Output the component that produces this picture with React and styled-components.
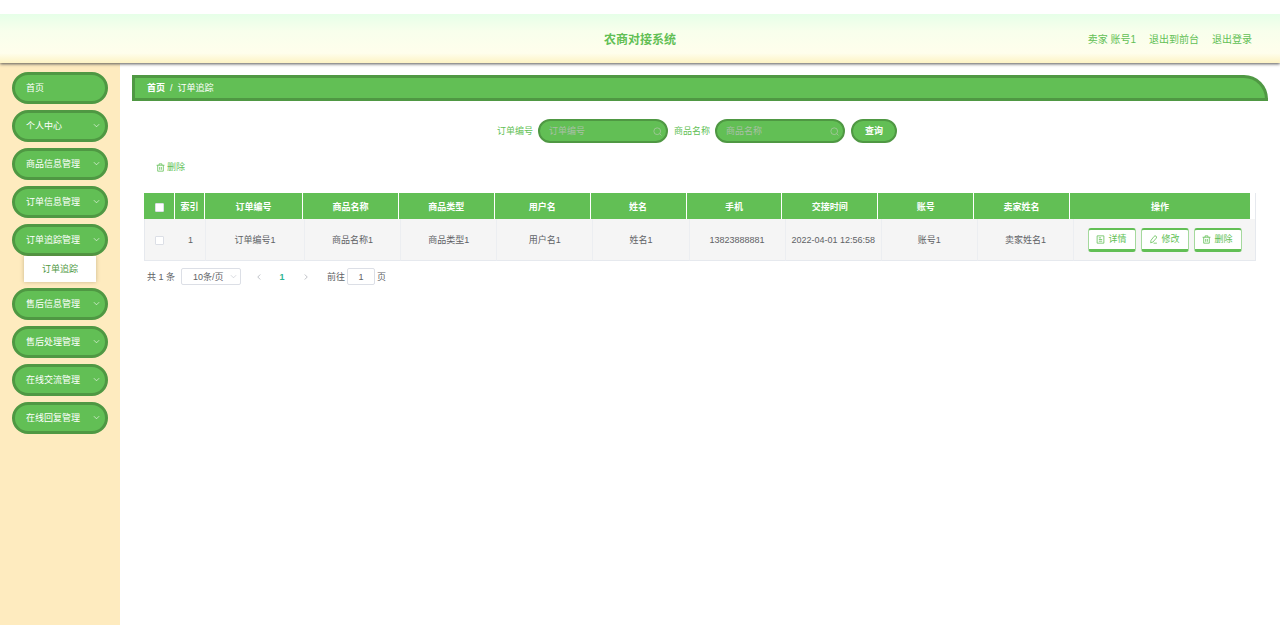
import React from "react";
import styled, { createGlobalStyle, css } from "styled-components";

const green = "#62bf55";
const darkGreen = "#4f9843";
const line = "#e6e9ee";
const grey = "#606266";

const GlobalStyle = createGlobalStyle`
  *, *::before, *::after { box-sizing: border-box; }
  body {
    margin: 0;
    background: #fff;
    color: ${grey};
    font-family: "Liberation Sans", "Noto Sans CJK SC", sans-serif;
    font-size: 9px;
    line-height: 12px;
  }
  button, input, select { font: inherit; color: inherit; margin: 0; }
  button { cursor: pointer; }
  a { color: inherit; text-decoration: none; }
`;

const Page = styled.div`
  display: flex;
  flex-direction: column;
  min-height: 100vh;
  padding: 14px 0 15px;
`;

const Header = styled.header`
  display: grid;
  grid-template-columns: 1fr auto 1fr;
  align-items: center;
  height: 49px;
  padding: 2px 28px 0;
  color: ${green};
  background: linear-gradient(180deg, #e6ffe8 0%, #f8ffec 35%, #fffeec 80%, #fdf3c4 100%);
  box-shadow: 0 1px 3px #555;
  clip-path: inset(0 0 -5px);
  z-index: 1;
`;

const Title = styled.h1`
  grid-column: 2;
  margin: 0;
  font-size: 12px;
  font-weight: 700;
  line-height: 20px;
`;

const UserNav = styled.nav`
  display: flex;
  justify-content: flex-end;
  gap: 13px;
  font-size: 10px;
  line-height: 16px;
`;

const Body = styled.div`
  display: flex;
  flex: 1;
`;

const Sidebar = styled.nav`
  flex: none;
  width: 120px;
  padding: 9px 12px;
  background: #feebbf;
`;

const Menu = styled.ul`
  display: flex;
  flex-direction: column;
  gap: 6px;
  margin: 0;
  padding: 0;
  list-style: none;
`;

const MenuButton = styled.button`
  display: flex;
  align-items: center;
  justify-content: space-between;
  width: 100%;
  height: 32px;
  padding: 0 5px 1px 11px;
  border: 3px solid ${darkGreen};
  border-radius: 16px;
  background: ${green};
  color: #fff;
`;

const SubLink = styled.a`
  display: block;
  margin: 0 12px;
  background: #fff;
  color: ${darkGreen};
  line-height: 26px;
  text-align: center;
  box-shadow: 0 0 4px rgba(120, 100, 60, 0.4);
`;

const Main = styled.main`
  flex: 1;
  min-width: 0;
  padding: 12px 12px;
`;

const Breadcrumb = styled.nav`
  display: flex;
  align-items: center;
  gap: 5px;
  height: 26px;
  padding: 0 12px 1px;
  border: 3px solid ${darkGreen};
  border-radius: 0 24px 0 0;
  background: ${green};
  color: #fff;
`;

const HomeLink = styled.a`
  font-weight: 700;
`;

const SearchForm = styled.form`
  display: flex;
  justify-content: center;
  align-items: center;
  gap: 6px;
  margin-top: 18px;
  padding-right: 6px;
`;

const Field = styled.label`
  display: flex;
  align-items: center;
  gap: 5px;
  color: ${green};
`;

const pill = css`
  height: 24px;
  border: 2px solid ${darkGreen};
  border-radius: 12px;
  background: ${green};
`;

const SearchBox = styled.span`
  ${pill}
  display: flex;
  align-items: center;
  width: 130px;
  padding: 0 4px 0 9px;
  color: #a9c8a2;
`;

const SearchInput = styled.input`
  flex: 1;
  min-width: 0;
  padding: 0;
  border: 0;
  outline: 0;
  background: none;
  color: #fff;
  &::placeholder { color: #a9bfa6; opacity: 1; }
`;

const QueryButton = styled.button`
  ${pill}
  width: 46px;
  padding: 0;
  color: #fff;
  font-weight: 700;
`;

const Content = styled.section`
  padding: 0 12px;
`;

const ToolButton = styled.button`
  display: flex;
  align-items: center;
  gap: 2px;
  height: 24px;
  margin: 12px 0 14px;
  padding: 0 12px;
  border: 0;
  background: none;
  color: ${green};
`;

const HeadFrame = styled.div`
  padding-right: 5px;
  border-right: 1px solid ${line};
`;

const Table = styled.table`
  width: 100%;
  table-layout: fixed;
  border-collapse: separate;
  border-spacing: 0;
  text-align: center;
`;

const Col = styled.col`
  width: ${(p) => (p.$w ? p.$w + "px" : "auto")};
`;

const HeadCell = styled.th`
  height: 26px;
  padding: 1px 0 0;
  border-right: 1px solid #fff;
  background: ${green};
  color: #fff;
  &:last-child { border-right: 0; }
`;

const Cell = styled.td`
  height: 42px;
  padding: 0;
  border-bottom: 1px solid ${line};
  border-right: ${(p) => (p.$plain ? "0" : "1px solid #eceef1")};
  background: #f5f5f5;
  white-space: nowrap;
  &:first-child { padding-right: 3px; border-left: 1px solid ${line}; }
  &:last-child { border-right: 1px solid ${line}; }
`;

const Check = styled.input.attrs({ type: "checkbox" })`
  appearance: none;
  display: block;
  width: 9px;
  height: 9px;
  margin: 1px auto 0;
  border: 1px solid #dcdfe6;
  border-radius: 1px;
  background: #fff;
`;

const Actions = styled.div`
  display: flex;
  justify-content: center;
  gap: 5px;
`;

const ActionButton = styled.button`
  display: flex;
  align-items: center;
  justify-content: center;
  gap: 3px;
  width: 48px;
  height: 24px;
  padding: 0;
  border: solid ${green};
  border-color: ${green} #a5d99d;
  border-width: 2px 1px 3px;
  border-radius: 3px;
  background: #fff;
  color: ${green};
`;

const Pagination = styled.nav`
  display: flex;
  align-items: center;
  margin-top: 7px;
  padding-left: 3px;
`;

const SizePicker = styled.span`
  display: grid;
  align-items: center;
  width: 60px;
  height: 17px;
  margin: 0 12px 0 6px;
  border: 1px solid #dcdfe6;
  border-radius: 2px;
  color: #c0c4cc;
  & > * { grid-area: 1 / 1; }
  & > svg { justify-self: end; margin-right: 3px; pointer-events: none; }
`;

const SizeSelect = styled.select`
  appearance: none;
  height: 15px;
  padding: 0 0 0 11px;
  border: 0;
  outline: 0;
  background: none;
  color: ${grey};
`;

const PageButton = styled.button`
  display: flex;
  align-items: center;
  justify-content: center;
  width: ${(p) => (p.$current ? "36px" : "11px")};
  height: 17px;
  padding: 0;
  border: 0;
  background: none;
  color: ${(p) => (p.$current ? "#2fb594" : "#a4a8b0")};
  font-weight: 700;
`;

const Jump = styled.label`
  display: flex;
  align-items: center;
  gap: 2px;
  margin-left: 16px;
`;

const JumpInput = styled.input`
  width: 28px;
  height: 17px;
  padding: 0;
  border: 1px solid #dcdfe6;
  border-radius: 2px;
  text-align: center;
`;

const Svg = ({ size = 8, children }) => (
  <svg width={size} height={size} viewBox="0 0 16 16" fill="none" stroke="currentColor" strokeWidth="1.4" aria-hidden="true">
    {children}
  </svg>
);
const Chevron = ({ d = "M2 5l6 6 6-6", size = 7 }) => <Svg size={size}><path d={d} /></Svg>;
const SearchIcon = () => (
  <Svg size={9}><circle cx="7.5" cy="7.5" r="6" /><path d="M12 12l3 3" /></Svg>
);
const TrashIcon = () => (
  <Svg size={9}><path d="M1 4h14M5.5 4V1.5h5V4M3 4v10.5h10V4M6.5 7v5M9.500 7v5" /></Svg>
);
const DocIcon = () => (
  <Svg size={9}><path d="M2 1.5h12v13H2zM5 5h4M5 8h6M5 11h6" /></Svg>
);
const EditIcon = () => (
  <Svg size={9}><path d="M9 2.500q1.500-2 3.500-.5t.5 3.500l-6 7-4 1.500.5-4.500zM8 14.500h6" /></Svg>
);

const menu = [
  { label: "首页", leaf: true },
  { label: "个人中心" },
  { label: "商品信息管理" },
  { label: "订单信息管理" },
  { label: "订单追踪管理", child: "订单追踪" },
  { label: "售后信息管理" },
  { label: "售后处理管理" },
  { label: "在线交流管理" },
  { label: "在线回复管理" },
];

const columns = [
  ["订单编号", "订单编号1"],
  ["商品名称", "商品名称1"],
  ["商品类型", "商品类型1"],
  ["用户名", "用户名1"],
  ["姓名", "姓名1"],
  ["手机", "13823888881"],
  ["交接时间", "2022-04-01 12:56:58"],
  ["账号", "账号1"],
  ["卖家姓名", "卖家姓名1"],
];

const Columns = ({ widths: [check, index, order, action] }) => (
  <colgroup>
    <Col $w={check} />
    <Col $w={index} />
    <Col $w={order} />
    {columns.slice(1).map(([name]) => <Col key={name} />)}
    <Col $w={action} />
  </colgroup>
);

const SearchField = ({ label }) => (
  <Field>
    {label}
    <SearchBox>
      <SearchInput type="text" placeholder={label} />
      <SearchIcon />
    </SearchBox>
  </Field>
);

export default function App() {
  return (
    <>
      <GlobalStyle />
      <Page>
        <Header>
          <Title>农商对接系统</Title>
          <UserNav>
            <span>卖家 账号1</span>
            <a href="#front">退出到前台</a>
            <a href="#logout">退出登录</a>
          </UserNav>
        </Header>
        <Body>
          <Sidebar>
            <Menu>
              {menu.map(({ label, leaf, child }) => (
                <li key={label}>
                  <MenuButton type="button">
                    {label}
                    {!leaf && <Chevron />}
                  </MenuButton>
                  {child && <SubLink href="#tracking">{child}</SubLink>}
                </li>
              ))}
            </Menu>
          </Sidebar>
          <Main>
            <Breadcrumb>
              <HomeLink href="#home">首页</HomeLink>
              <span>/</span>
              <span>订单追踪</span>
            </Breadcrumb>
            <SearchForm onSubmit={(e) => e.preventDefault()}>
              <SearchField label="订单编号" />
              <SearchField label="商品名称" />
              <QueryButton type="submit">查询</QueryButton>
            </SearchForm>
            <Content>
              <ToolButton type="button"><TrashIcon />删除</ToolButton>
              <HeadFrame>
                <Table>
                  <Columns widths={[31, 30, 98, 180]} />
                  <thead>
                    <tr>
                      <HeadCell><Check aria-label="全选" /></HeadCell>
                      <HeadCell>索引</HeadCell>
                      {columns.map(([name]) => <HeadCell key={name}>{name}</HeadCell>)}
                      <HeadCell>操作</HeadCell>
                    </tr>
                  </thead>
                </Table>
              </HeadFrame>
              <Table>
                <Columns widths={[32, 30, 99, 182]} />
                <tbody>
                  <tr>
                    <Cell $plain><Check aria-label="选择" /></Cell>
                    <Cell>1</Cell>
                    {columns.map(([name, value]) => <Cell key={name}>{value}</Cell>)}
                    <Cell $plain>
                      <Actions>
                        <ActionButton type="button"><DocIcon />详情</ActionButton>
                        <ActionButton type="button"><EditIcon />修改</ActionButton>
                        <ActionButton type="button"><TrashIcon />删除</ActionButton>
                      </Actions>
                    </Cell>
                  </tr>
                </tbody>
              </Table>
              <Pagination>
                <span>共 1 条</span>
                <SizePicker>
                  <SizeSelect aria-label="每页条数"><option>10条/页</option></SizeSelect>
                  <Chevron />
                </SizePicker>
                <PageButton type="button" aria-label="上一页"><Chevron d="M10.5 3l-5 5 5 5" size={8} /></PageButton>
                <PageButton type="button" $current>1</PageButton>
                <PageButton type="button" aria-label="下一页"><Chevron d="M5.5 3l5 5-5 5" size={8} /></PageButton>
                <Jump>前往<JumpInput type="text" defaultValue="1" aria-label="页码" />页</Jump>
              </Pagination>
            </Content>
          </Main>
        </Body>
      </Page>
    </>
  );
}
